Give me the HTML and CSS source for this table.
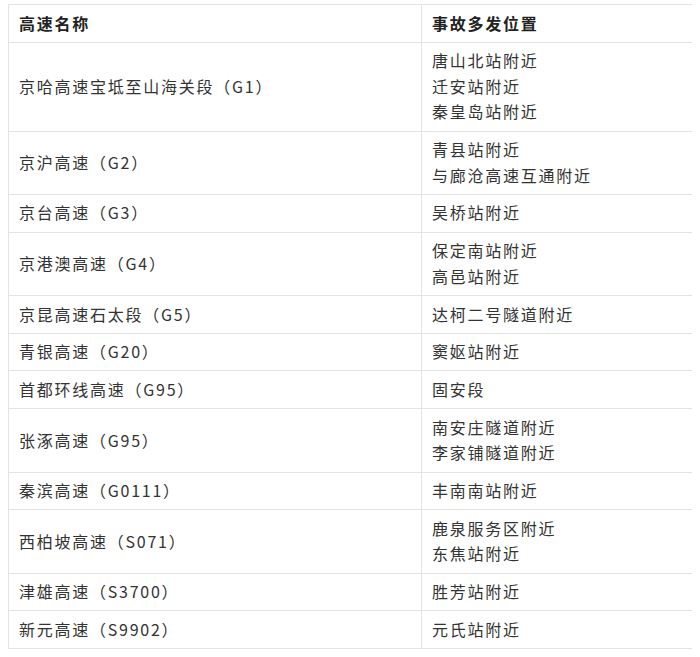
FILE: index.html
```html
<!DOCTYPE html>
<html lang="zh-CN">
<head>
<meta charset="utf-8">
<title>高速事故多发位置</title>
<link rel="stylesheet" href="styles.css">
</head>
<body>
<table class="road-table">
  <colgroup>
    <col class="col-name">
    <col class="col-place">
  </colgroup>
  <thead>
    <tr><th>高速名称</th><th>事故多发位置</th></tr>
  </thead>
  <tbody>
    <tr><td>京哈高速宝坻至山海关段（G1）</td><td>唐山北站附近<br>迁安站附近<br>秦皇岛站附近</td></tr>
    <tr><td>京沪高速（G2）</td><td>青县站附近<br>与廊沧高速互通附近</td></tr>
    <tr><td>京台高速（G3）</td><td>吴桥站附近</td></tr>
    <tr><td>京港澳高速（G4）</td><td>保定南站附近<br>高邑站附近</td></tr>
    <tr><td>京昆高速石太段（G5）</td><td>达柯二号隧道附近</td></tr>
    <tr><td>青银高速（G20）</td><td>窦妪站附近</td></tr>
    <tr><td>首都环线高速（G95）</td><td>固安段</td></tr>
    <tr><td>张涿高速（G95）</td><td>南安庄隧道附近<br>李家铺隧道附近</td></tr>
    <tr><td>秦滨高速（G0111）</td><td>丰南南站附近</td></tr>
    <tr><td>西柏坡高速（S071）</td><td>鹿泉服务区附近<br>东焦站附近</td></tr>
    <tr><td>津雄高速（S3700）</td><td>胜芳站附近</td></tr>
    <tr><td>新元高速（S9902）</td><td>元氏站附近</td></tr>
  </tbody>
</table>
</body>
</html>
```
FILE: styles.css
```css
html, body {
  background: #ffffff;
}
body {
  margin: 4px 8px;
  font-family: "Noto Sans CJK SC", "Noto Sans", sans-serif;
  color: #333333;
}
.road-table {
  width: 685px;
  border-collapse: collapse;
  table-layout: fixed;
  font-size: 16px;
  line-height: 25.5px;
  letter-spacing: 1.75px;
}
.col-name {
  width: 413px;
}
.col-place {
  width: 272px;
}
.road-table th,
.road-table td {
  border: 1px solid #e3e3e3;
  padding: 5.65px 10px;
  text-align: left;
  vertical-align: middle;
}
.road-table th {
  font-weight: 700;
  color: #222222;
}
```
